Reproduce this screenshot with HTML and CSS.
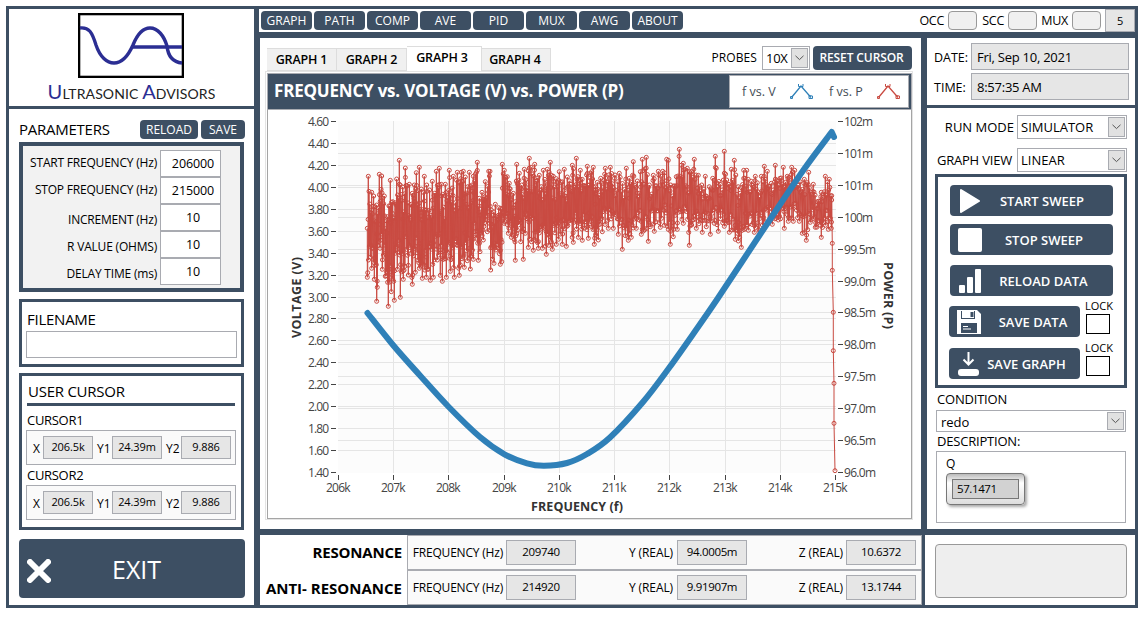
FILE: index.html
```html
<!DOCTYPE html>
<html lang="en">
<head>
  <meta charset="UTF-8">
  <meta name="viewport" content="width=device-width, initial-scale=1.0">
  <title>Ultrasonic Advisors</title>
  <link rel="stylesheet" href="styles.css">
</head>
<body>
  <div class="app">
    <div class="sidebar">
      <div class="logo">
        <svg width="106" height="65" viewBox="0 0 106 65">
          <rect x="1" y="1" width="104" height="63" fill="#fff" stroke="#000" stroke-width="2.6"/>
          <g fill="none" stroke="#2b2e93" stroke-width="3.4">
            <path d="M2 15 C11 14 14 19 18 32 C22 44 29 50 36 50 C45 50 51 41 55 32 C59 22 64 15 72 15 C80 15 86 23 89 33 C90 43 94 49 104 50"/>
            <path d="M54 34 H104"/>
          </g>
        </svg>
        <div class="logo-text"><b>U</b>LTRASONIC <b>A</b>DVISORS</div>
      </div>
      <div class="side-body">
        <div class="side-head">
          <span class="heading parameters">PARAMETERS</span>
          <button class="btn small reload">RELOAD</button>
          <button class="btn small save">SAVE</button>
        </div>
        <div class="params">
          <div class="param"><label class="up">START FREQUENCY (Hz)</label><span class="field">206000</span></div>
          <div class="param"><label class="up">STOP FREQUENCY (Hz)</label><span class="field">215000</span></div>
          <div class="param"><label>INCREMENT (Hz)</label><span class="field">10</span></div>
          <div class="param"><label>R VALUE (OHMS)</label><span class="field">10</span></div>
          <div class="param"><label>DELAY TIME (ms)</label><span class="field">10</span></div>
        </div>
        <div class="filename">
          <div class="heading">FILENAME</div>
          <div class="file-input"></div>
        </div>
        <div class="cursors">
          <div class="heading cursor-title">USER CURSOR</div>
          <div class="cursor-label">CURSOR1</div>
          <div class="cursor-row">
            <label>X</label><span>206.5k</span><label>Y1</label><span>24.39m</span><label>Y2</label><span>9.886</span>
          </div>
          <div class="cursor-label second">CURSOR2</div>
          <div class="cursor-row">
            <label>X</label><span>206.5k</span><label>Y1</label><span>24.39m</span><label>Y2</label><span>9.886</span>
          </div>
        </div>
        <button class="exit">
          <svg width="24" height="24" viewBox="0 0 24 24"><path d="M3 3 L21 21 M21 3 L3 21" stroke="#fff" stroke-width="6" stroke-linecap="round"/></svg>
          <span>EXIT</span>
        </button>
      </div>
    </div>

    <div class="main">
      <div class="toolbar">
        <div class="menu">
          <button class="btn">GRAPH</button>
          <button class="btn">PATH</button>
          <button class="btn">COMP</button>
          <button class="btn">AVE</button>
          <button class="btn">PID</button>
          <button class="btn">MUX</button>
          <button class="btn">AWG</button>
          <button class="btn">ABOUT</button>
        </div>
        <div class="leds">
          <label>OCC</label><span class="led"></span>
          <label>SCC</label><span class="led"></span>
          <label class="mux">MUX</label><span class="led"></span>
          <span class="count">5</span>
        </div>
      </div>

      <div class="middle">
        <div class="graph-panel">
          <div class="graph-top">
            <div class="tabs">
              <div class="tab">GRAPH 1</div>
              <div class="tab">GRAPH 2</div>
              <div class="tab active">GRAPH 3</div>
              <div class="tab last">GRAPH 4</div>
            </div>
            <div class="probes">
              <label>PROBES</label>
              <div class="select probe-select"><span>10X</span><i><svg width="9" height="6"><path d="M.5 .8 L4.5 4.6 L8.5 .8" fill="none" stroke="#555"/></svg></i></div>
              <button class="btn reset">RESET CURSOR</button>
            </div>
          </div>
          <div class="graph-box">
            <div class="graph-title">
              <h1>FREQUENCY vs. VOLTAGE (V) vs. POWER (P)</h1>
              <div class="legend">
                <span>f vs. V</span>
                <svg class="volt" width="27" height="18" viewBox="0 0 27 18" fill="none"><path d="M2.5 14.5 L12 3 L22 14.5" stroke-width="1.3"/><path d="M1.5 13.5 h2 v2 h-2 z M9.5 1 v2.5 h4.5 v-2.5 M20 12.5 v3 h3.5 v-2.5 z"/></svg>
                <span>f vs. P</span>
                <svg class="pow" width="27" height="18" viewBox="0 0 27 18" fill="none"><path d="M2.5 14.5 L12 3 L22 14.5" stroke-width="1.3"/><path d="M1.5 13.5 h2 v2 h-2 z M9.5 1 v2.5 h4.5 v-2.5 M20 12.5 v3 h3.5 v-2.5 z"/></svg>
              </div>
            </div>
            <svg id="chart" class="chart" width="643" height="408" viewBox="268 110 643 408"></svg>
          </div>
        </div>

        <div class="right">
          <div class="clock">
            <div><label>DATE:</label><span>Fri, Sep 10, 2021</span></div>
            <div><label>TIME:</label><span>8:57:35 AM</span></div>
          </div>
          <div class="controls">
            <div class="option">
              <label class="run-label">RUN MODE</label>
              <div class="select"><span>SIMULATOR</span><i><svg width="9" height="6"><path d="M.5 .8 L4.5 4.6 L8.5 .8" fill="none" stroke="#555"/></svg></i></div>
            </div>
            <div class="option">
              <label class="view-label">GRAPH VIEW</label>
              <div class="select"><span>LINEAR</span><i><svg width="9" height="6"><path d="M.5 .8 L4.5 4.6 L8.5 .8" fill="none" stroke="#555"/></svg></i></div>
            </div>
            <div class="actions">
              <button class="action">
                <svg width="24" height="24"><path d="M3 1 L21 12 L3 23 Z" fill="#fff" stroke="#fff" stroke-width="2" stroke-linejoin="round"/></svg>
                <span>START SWEEP</span>
              </button>
              <button class="action stop">
                <svg width="24" height="24"><rect width="24" height="24" rx="2" fill="#fff"/></svg>
                <span>STOP SWEEP</span>
              </button>
              <button class="action data">
                <svg width="24" height="24" fill="#fff"><rect x="1" y="16" width="6" height="8" rx="1"/><rect x="9" y="8" width="6" height="16" rx="1"/><rect x="17" y="0" width="6" height="24" rx="1"/></svg>
                <span>RELOAD DATA</span>
              </button>
              <div class="lock-row">
                <button class="action">
                  <svg width="24" height="24"><path d="M0 0 H20 L24 4 V24 H0 Z" fill="#fff"/><path d="M4 1 H18 V9 H4 Z M4 13 H20 V23 H4 Z" fill="#3d4f63"/><path d="M5 1 H17 V8 H5 Z" fill="#fff"/><path d="M13.5 2 h3 v5 h-3 z" fill="#3d4f63"/><path d="M6 16.5 h5 M6 19 h8" stroke="#fff"/></svg>
                  <span class="save-data">SAVE DATA</span>
                </button>
                <div class="lock"><label>LOCK</label><i></i></div>
              </div>
              <div class="lock-row graph">
                <button class="action">
                  <svg width="24" height="24" fill="none" stroke="#fff"><path d="M11.5 0 V12 M6.5 7.5 L11.5 12.5 L16.5 7.5" stroke-width="2"/><rect x="1" y="17" width="21" height="7" rx="3" fill="#fff" stroke="none"/></svg>
                  <span>SAVE GRAPH</span>
                </button>
                <div class="lock"><label>LOCK</label><i></i></div>
              </div>
            </div>
            <div class="note-label condition">CONDITION</div>
            <div class="select condition-select"><span>redo</span><i><svg width="9" height="6"><path d="M.5 .8 L4.5 4.6 L8.5 .8" fill="none" stroke="#555"/></svg></i></div>
            <div class="note-label description">DESCRIPTION:</div>
            <div class="notes">
              <div class="q-label">Q</div>
              <div class="q-frame"><span>57.1471</span></div>
            </div>
          </div>
        </div>
      </div>

      <div class="bottom">
        <div class="results">
          <div class="result">
            <h2>RESONANCE</h2>
            <div class="values">
              <label class="freq">FREQUENCY (Hz)</label><span>209740</span>
              <label>Y (REAL)</label><span>94.0005m</span>
              <label class="z">Z (REAL)</label><span>10.6372</span>
            </div>
          </div>
          <div class="result">
            <h2>ANTI- RESONANCE</h2>
            <div class="values">
              <label class="freq">FREQUENCY (Hz)</label><span>214920</span>
              <label>Y (REAL)</label><span>9.91907m</span>
              <label class="z">Z (REAL)</label><span>13.1744</span>
            </div>
          </div>
        </div>
        <div class="status"><div></div></div>
      </div>
    </div>
  </div>
  <script src="chart.js"></script>
</body>
</html>
```
FILE: styles.css
```css
* {
  box-sizing: border-box;
}
body {
  margin: 0;
  background: #fff;
  color: #000;
  font-family: "Open Sans", "Noto Sans", sans-serif;
  font-size: 12px;
  white-space: nowrap;
}
button {
  border: 0;
  padding: 0;
  margin: 0;
  font: inherit;
  color: #fff;
  background: #3d4f63;
  border-radius: 4px;
}
i {
  font-style: normal;
}
.app {
  width: 1132px;
  height: 602px;
  margin: 6px;
  padding: 3px;
  display: grid;
  grid-template-columns: 245px 876px;
  gap: 5px;
  background: #3d4f63;
}

/* left column */
.sidebar {
  display: flex;
  flex-direction: column;
  gap: 3px;
}
.logo {
  height: 97px;
  background: #fff;
  padding-top: 4px;
  text-align: center;
}
.logo svg {
  display: block;
  margin-left: 69px;
}
.logo-text {
  font-family: Lato, sans-serif;
  font-size: 14px;
  line-height: 26px;
  letter-spacing: 0.1px;
  color: #222;
}
.logo-text b {
  font-size: 20px;
  font-weight: 400;
  color: #2b2e93;
}
.side-body {
  height: 496px;
  background: #fff;
  padding: 11px 9px 0 10px;
}
.side-head {
  display: flex;
  height: 22px;
}
.heading {
  font-size: 15px;
  line-height: 20px;
  letter-spacing: -0.25px;
}
.parameters {
  width: 121px;
  line-height: 18px;
}
.btn {
  height: 19px;
  line-height: 18px;
  font-size: 12px;
  font-weight: 500;
}
.reload {
  width: 58px;
  margin-right: 3px;
}
.save {
  width: 44px;
}
.params {
  width: 225px;
  height: 150px;
  border: 4px solid #3d4f63;
  background: #f2f2f2;
  padding-top: 4px;
}
.param {
  display: flex;
  height: 27px;
}
.param label {
  width: 134px;
  padding-top: 4px;
  line-height: 24px;
  text-align: right;
  letter-spacing: -0.2px;
}
.param .up {
  padding-top: 1px;
}
.field {
  width: 61px;
  margin-left: 3px;
  padding-left: 5px;
  border: 1px solid #a9abb1;
  background: #fff;
  text-align: center;
  line-height: 26px;
  font-size: 12.5px;
  letter-spacing: -0.1px;
}
.filename {
  width: 225px;
  height: 68px;
  margin-top: 7px;
  border: 3px solid #3d4f63;
  padding: 7px 4px;
}
.filename .heading {
  padding-left: 1px;
}
.file-input {
  width: 211px;
  height: 27px;
  margin-top: 2px;
  border: 1px solid #a9abb1;
}
.cursors {
  width: 225px;
  height: 157px;
  margin-top: 6px;
  border: 3px solid #3d4f63;
  padding: 5px 4px;
}
.cursor-title {
  height: 25px;
  width: 208px;
  margin-left: 1px;
  padding-left: 1px;
  border-bottom: 3px solid #3d4f63;
}
.cursor-label {
  height: 24px;
  padding: 5px 0 0 1px;
  line-height: 18px;
  font-size: 13px;
  letter-spacing: -0.3px;
}
.cursor-label.second {
  height: 20px;
  padding-top: 1px;
}
.cursor-row {
  display: flex;
  align-items: center;
  width: 210px;
  height: 35px;
  padding-left: 6px;
  border: 1px solid #a9abb1;
  background: #fafafa;
}
.cursor-row label {
  width: 19px;
  padding-top: 2px;
}
.cursor-row label:first-child {
  width: 10px;
}
.cursor-row span {
  width: 50px;
  height: 23px;
  border: 1px solid #a9abb1;
  background: #e6e6e6;
  text-align: center;
  line-height: 20px;
  font-size: 11px;
  letter-spacing: -0.1px;
}
.cursor-row label + span + label {
  padding-left: 4px;
}
.exit {
  display: flex;
  align-items: center;
  width: 226px;
  height: 59px;
  margin-top: 9px;
  padding: 5px 0 0 8px;
  font-size: 25px;
}
.exit span {
  margin: -5px 0 0 61px;
}

/* top bar */
.main {
  display: flex;
  flex-direction: column;
  gap: 6px;
}
.toolbar {
  display: flex;
  justify-content: space-between;
  height: 23px;
  background: #fff;
}
.menu {
  display: flex;
  gap: 2px;
  padding: 2px;
}
.menu .btn {
  width: 51px;
}
.leds {
  display: flex;
  align-items: center;
  font-size: 12.5px;
  letter-spacing: -0.3px;
}
.leds label {
  width: 27px;
  text-align: right;
}
.leds .mux {
  width: 31px;
}
.led {
  width: 29px;
  height: 19px;
  margin-left: 4px;
  border: 1px solid #999;
  border-radius: 4px;
  background: #f0f0f0;
}
.count {
  width: 30px;
  height: 23px;
  margin-left: 4px;
  border: 1px solid #a9abb1;
  background: #e6e6e6;
  text-align: center;
  line-height: 21px;
  font-size: 11px;
}

/* graph */
.middle {
  display: flex;
  gap: 6px;
  height: 491px;
  padding-left: 1px;
}
.graph-panel {
  width: 661px;
  background: #fff;
  padding: 8px 6px 0 5px;
}
.graph-top {
  display: flex;
  justify-content: space-between;
  height: 25px;
}
.tabs {
  display: flex;
  align-items: flex-end;
  padding-left: 2px;
}
.tab {
  width: 70px;
  height: 23px;
  border: 1px solid #ddd;
  border-left: 0;
  background: #f0f0f0;
  text-align: center;
  line-height: 22px;
  font-size: 12.5px;
  font-weight: 600;
  letter-spacing: -0.15px;
}
.tab.active {
  width: 75px;
  height: 25px;
  padding-right: 4px;
  background: #fff;
  border-bottom: 0;
}
.tab.last {
  width: 69px;
  padding-right: 2px;
}
.probes {
  display: flex;
  padding-right: 3px;
}
.probes label {
  line-height: 24px;
  margin-right: 5px;
  letter-spacing: 0.1px;
}
.select {
  display: flex;
  justify-content: space-between;
  width: 110px;
  height: 24px;
  border: 1px solid #a9abb1;
  background: #fff;
  padding: 1px 1px 1px 3px;
  line-height: 21px;
  font-size: 13px;
}
.select i {
  display: flex;
  align-items: center;
  justify-content: center;
  width: 17px;
  border: 1px solid #a9abb1;
  background: #e1e1e1;
}
.probe-select {
  width: 48px;
  margin-right: 3px;
  letter-spacing: -0.3px;
}
.reset {
  width: 99px;
  height: 24px;
  line-height: 22px;
  padding-right: 2px;
  font-size: 12px;
  font-weight: 600;
  letter-spacing: -0.1px;
}
.graph-box {
  width: 648px;
  height: 449px;
  border: 1px solid #e4e4e4;
  padding: 1px 1px 0 1px;
}
.graph-title {
  display: flex;
  justify-content: space-between;
  width: 645px;
  height: 37px;
  padding: 1px 2px 1px 6px;
  border: 1px solid #a9abb1;
  background: #3d4f63;
}
.graph-title h1 {
  margin: 0;
  color: #fff;
  font-size: 17px;
  font-weight: 700;
  line-height: 32px;
  letter-spacing: -0.2px;
}
.legend {
  display: flex;
  align-items: center;
  width: 180px;
  height: 33px;
  border: 1px solid #a9abb1;
  background: #fff;
  padding-left: 12px;
  color: #444c55;
  font-size: 12.5px;
}
.legend span {
  width: 35px;
}
.legend svg {
  margin-left: 12px;
}
.legend .volt {
  margin-right: 13px;
  stroke: #2f80b8;
}
.legend .pow {
  stroke: #c94a41;
}
.chart {
  display: block;
  box-sizing: content-box;
  border: 1px solid #a5a5a5;
  border-top: 0;
}

/* right column */
.right {
  display: flex;
  flex-direction: column;
  gap: 3px;
}
.clock {
  width: 208px;
  height: 67px;
  padding: 5px 6px;
  background: #fff;
}
.clock div {
  display: flex;
  height: 30px;
}
.clock label {
  width: 38px;
  padding-left: 1px;
  line-height: 30px;
  font-size: 12.5px;
}
.clock span {
  width: 158px;
  height: 27px;
  border: 1px solid #a9abb1;
  background: #e6e6e6;
  padding-left: 5px;
  line-height: 26px;
  font-size: 13px;
  letter-spacing: -0.25px;
}
.controls {
  width: 208px;
  height: 421px;
  padding: 7px 8px 0;
  background: #fff;
}
.option {
  display: flex;
  justify-content: flex-end;
  height: 33px;
  font-size: 13px;
}
.option label {
  line-height: 24px;
}
.run-label {
  margin-right: 3px;
}
.view-label {
  margin-right: 5px;
  letter-spacing: -0.2px;
}
.actions {
  width: 192px;
  height: 214px;
  margin-top: -7px;
  border: 3px solid #3d4f63;
  padding: 8px 0 0 12px;
}
.action {
  display: flex;
  align-items: center;
  width: 163px;
  height: 31px;
  padding-left: 8px;
  font-size: 13px;
  font-weight: 600;
}
.action span {
  flex: 1;
  padding-right: 11px;
  text-align: center;
}
.stop {
  margin-top: 8px;
}
.stop span {
  padding-right: 7px;
}
.data {
  margin-top: 10px;
}
.data span {
  padding-right: 8px;
}
.lock-row {
  display: flex;
  height: 42px;
  margin: 7px 0 0 -1px;
}
.lock-row.graph {
  margin-top: 0;
}
.lock-row .action {
  width: 131px;
  margin-top: 3px;
}
.lock-row .action span {
  padding: 0 8px 0 0;
}
.lock-row .action .save-data {
  padding: 0 0 0 5px;
}
.lock {
  margin: -3px 0 0 5px;
  font-size: 11px;
  line-height: 11px;
}
.lock i {
  display: block;
  width: 24px;
  height: 20px;
  margin: 3px 0 0 1px;
  border: 1px solid #000;
}
.note-label {
  height: 22px;
  line-height: 22px;
  padding-left: 2px;
  font-size: 13px;
  letter-spacing: -0.2px;
}
.description {
  height: 19px;
  line-height: 18px;
}
.condition-select {
  width: 190px;
  height: 22px;
  margin-left: 1px;
  padding-left: 4px;
}
.notes {
  width: 190px;
  height: 72px;
  margin-left: 1px;
  border: 1px solid #a9abb1;
  padding: 4px 0 0 9px;
}
.q-label {
  height: 17px;
  line-height: 16px;
}
.q-frame {
  width: 79px;
  height: 32px;
  border: 1px solid #777;
  border-radius: 4px;
  padding: 5px;
  background: linear-gradient(#bbb, #fff 30%, #ddd);
  box-shadow: 2px 2px 3px #aaa;
}
.q-frame span {
  display: block;
  height: 20px;
  border: 1px solid #777;
  background: #d2d2d2;
  padding-left: 4px;
  line-height: 18px;
  font-size: 11.5px;
  letter-spacing: -0.4px;
}

/* bottom row */
.bottom {
  display: flex;
  justify-content: space-between;
  height: 70px;
  padding-left: 1px;
}
.results {
  width: 662px;
  background: #fff;
}
.result {
  display: flex;
  justify-content: flex-end;
  height: 35px;
}
.result h2 {
  margin: 0 5px 0 0;
  font-size: 15px;
  font-weight: 700;
  line-height: 35px;
  letter-spacing: -0.2px;
}
.result + .result h2 {
  margin-top: 1px;
  letter-spacing: 0;
}
.values {
  display: flex;
  align-items: center;
  width: 515px;
  padding: 0 5px 1px 4px;
  border: 1px solid #a9abb1;
  background: #fafafa;
}
.values span {
  width: 70px;
  height: 25px;
  border: 1px solid #a9abb1;
  background: #e6e6e6;
  text-align: center;
  line-height: 22px;
  font-size: 11.5px;
  letter-spacing: -0.35px;
}
.values label {
  width: 101px;
  padding-right: 4px;
  text-align: right;
  letter-spacing: -0.1px;
}
.values .freq {
  width: 94px;
  padding-right: 3px;
  letter-spacing: -0.2px;
}
.values .z {
  width: 99px;
  padding-right: 3px;
}
.status {
  width: 210px;
  padding: 9px 8px 0 10px;
  background: #fff;
}
.status div {
  height: 54px;
  border: 1px solid #999;
  border-radius: 4px;
  background: #eee;
}

/* chart */
.grid {
  stroke: #e5e5e5;
}
.tick {
  stroke: #444;
}
.axis {
  fill: #444;
  font-size: 12px;
}
.axis-title {
  fill: #333;
  font-size: 12.5px;
  font-weight: 700;
}
.power,
.power-line {
  fill: none;
  stroke: #c94a41;
}
.voltage {
  fill: none;
  stroke: #2f80b8;
  stroke-width: 6;
  stroke-linecap: round;
  stroke-linejoin: round;
}
```
FILE: chart.js
```js
const chart = document.getElementById('chart');
const LEFT = 338, RIGHT = 835, TOP = 121.5, BOTTOM = 472.5;

function add(tag, attrs, text) {
  const el = document.createElementNS('http://www.w3.org/2000/svg', tag);
  for (const k in attrs) el.setAttribute(k, attrs[k]);
  if (text) el.textContent = text;
  chart.appendChild(el);
}

add('rect', { x: LEFT, y: 121, width: RIGHT - LEFT + 1, height: 352, fill: '#fcfcfc' });

// left axis
for (let i = 0; i <= 16; i++) {
  const y = Math.round(TOP + i * (BOTTOM - TOP) / 16 - 0.5) + 0.5;
  if (i > 0 && i < 16) add('path', { d: `M${LEFT} ${y}H${RIGHT + 1}`, class: 'grid' });
  add('path', { d: `M331 ${y}h5`, class: 'tick' });
  add('text', { x: 308, y: y + 4.5, textLength: 21, class: 'axis' }, (4.6 - i * 0.2).toFixed(2));
}

// right axis
const powerLabels = ['102m', '101m', '101m', '100m', '99.5m', '99.0m', '98.5m', '98.0m', '97.5m', '97.0m', '96.5m', '96.0m'];
powerLabels.forEach((label, i) => {
  const y = Math.round(TOP + i * (BOTTOM - TOP) / 11 - 0.5) + 0.5;
  if (i > 0 && i < 11) add('path', { d: `M${LEFT} ${y}H${RIGHT + 1}`, class: 'grid' });
  add('path', { d: `M838 ${y}h5`, class: 'tick' });
  add('text', { x: 844, y: y + 4.5, textLength: label.length > 4 ? 32 : 29, class: 'axis' }, label);
});

// frequency axis
for (let i = 0; i <= 9; i++) {
  const x = Math.round(LEFT + i * (RIGHT - LEFT) / 9) + 0.5;
  if (i > 0 && i < 9) add('path', { d: `M${x} 121V473`, class: 'grid' });
  add('path', { d: `M${x} 475v5`, class: 'tick' });
  add('text', { x: x - 12.5, y: 492, textLength: 24.5, class: 'axis' }, (206 + i) + 'k');
}

add('text', { x: 531, y: 511, textLength: 92, class: 'axis-title' }, 'FREQUENCY (f)');
add('text', { transform: 'translate(301 338) rotate(-90)', textLength: 81, class: 'axis-title' }, 'VOLTAGE (V)');
add('text', { transform: 'translate(884 262) rotate(90)', textLength: 67, class: 'axis-title' }, 'POWER (P)');

// peaks and dips of the power trace, three units to a pixel
const peaks = [[262,370],[265,214],[275,262],[281,273],[290,300],[298,208],[305,213],[313,273],[322,335],[331,226],[338,290],[350,222],[358,166],[368,246],[376,189],[388,238],[397,265],[403,240],[409,203],[418,187],[424,252],[433,214],[440,240],[457,229],[469,199],[478,190],[484,238],[496,238],[508,196],[520,214],[532,202],[544,202],[550,199],[556,216],[568,202],[576,240],[580,214],[586,208],[592,172],[598,280],[606,262],[616,230],[626,199],[630,199],[634,315],[646,298],[656,308],[662,310],[667,178],[673,196],[682,215],[688,235],[700,265],[706,290],[710,178],[718,205],[725,240],[733,193],[748,160],[764,178],[778,211],[790,196],[802,193],[811,172],[820,214],[838,200],[853,193],[862,216],[877,181],[889,160],[901,196],[922,184],[940,187],[946,245],[952,232],[962,220],[976,190],[991,187],[1005,210],[1018,205],[1039,190],[1048,220],[1060,170],[1072,228],[1081,200],[1087,163],[1099,157],[1108,240],[1120,211],[1135,199],[1148,199],[1160,163],[1165,166],[1172,240],[1189,215],[1198,133],[1210,175],[1222,190],[1228,200],[1243,163],[1255,211],[1265,240],[1276,214],[1288,245],[1298,220],[1306,154],[1309,190],[1321,238],[1333,139],[1345,238],[1354,193],[1363,166],[1375,245],[1391,196],[1400,196],[1414,229],[1426,214],[1444,214],[1453,184],[1462,199],[1474,235],[1486,181],[1500,220],[1510,187],[1522,214],[1535,187],[1544,196],[1560,230],[1573,223],[1586,202],[1600,238],[1612,290],[1624,262],[1636,214],[1648,223],[1655,272]];
const dips = [[262,517],[275,490],[283,523],[290,589],[292,547],[300,430],[307,493],[316,514],[325,604],[334,560],[343,586],[352,493],[361,577],[370,523],[385,510],[397,538],[406,502],[418,490],[427,520],[439,517],[451,526],[460,517],[472,465],[481,511],[487,529],[499,517],[511,499],[523,517],[538,511],[553,487],[571,492],[580,463],[588,400],[595,466],[600,440],[610,405],[622,380],[628,355],[632,495],[642,475],[661,478],[665,470],[672,355],[685,385],[694,397],[706,466],[712,375],[722,410],[730,463],[736,385],[745,427],[760,436],[775,430],[787,430],[799,448],[817,433],[829,418],[847,418],[859,424],[880,412],[895,397],[907,406],[925,400],[935,365],[943,418],[955,405],[967,380],[985,370],[1000,370],[1015,388],[1027,433],[1045,406],[1054,397],[1069,370],[1084,388],[1105,409],[1111,365],[1123,379],[1141,367],[1153,361],[1171,418],[1180,395],[1192,373],[1210,355],[1228,421],[1235,360],[1249,370],[1267,382],[1279,365],[1291,388],[1303,355],[1315,379],[1333,364],[1348,382],[1366,403],[1375,408],[1384,427],[1396,370],[1405,376],[1423,382],[1435,395],[1450,375],[1465,355],[1477,358],[1495,345],[1513,370],[1525,349],[1540,349],[1558,349],[1567,385],[1579,406],[1591,352],[1606,367],[1624,397],[1636,361],[1645,373],[1654,370]];
const tail = [[1655,285],[1657,415],[1657,496],[1660,622],[1660,737],[1662,835],[1662,955],[1665,1097]];

function at(list, x) {
  let i = 1;
  while (i < list.length - 1 && list[i][0] < x) i++;
  const [x0, y0] = list[i - 1], [x1, y1] = list[i];
  return y0 + (y1 - y0) * Math.min(1, (x - x0) / (x1 - x0));
}

let seed = 7;
function random() {
  seed = (seed * 16807) % 2147483647;
  return seed / 2147483647;
}

const points = peaks.concat(dips);
for (let x = 263, i = 0; x < 1655; x += x < 1000 ? 1.3 : 1.7, i++) {
  const up = at(peaks, x), low = at(dips, x), h = low - up;
  const inset = 0.06 + 0.32 * random();
  points.push([x, i % 2 ? up + inset * h : low - inset * h]);
}
points.sort((a, b) => a[0] - b[0]);
const trace = points.concat(tail).map(([x, y]) => [x / 3 + 280, y / 3 + 105]);

add('polyline', { points: trace.map(p => p.map(v => v.toFixed(1)).join()).join(' '), class: 'power-line' });
trace.forEach(([x, y]) => add('circle', { cx: x.toFixed(1), cy: y.toFixed(1), r: 2, class: 'power' }));

// voltage curve, smoothed through its points
const volts = [[367.5,313],[393,345],[420,375.5],[448.3,406.5],[480,437],[504.5,454.3],[527,463.3],[544,465.7],[567,463],[587,454],[610,437.5],[643,402],[669,368],[697,328.5],[717,299.5],[743.5,259.5],[773,215],[803.5,170],[831.7,132]];
let d = 'M' + volts[0];
for (let i = 0; i < volts.length - 1; i++) {
  const a = volts[i - 1] || volts[i], b = volts[i], c = volts[i + 1], e = volts[i + 2] || c;
  d += `C${b[0] + (c[0] - a[0]) / 6} ${b[1] + (c[1] - a[1]) / 6} ${c[0] - (e[0] - b[0]) / 6} ${c[1] - (e[1] - b[1]) / 6} ${c}`;
}
add('path', { d: d + 'L834 137', class: 'voltage' });
```
